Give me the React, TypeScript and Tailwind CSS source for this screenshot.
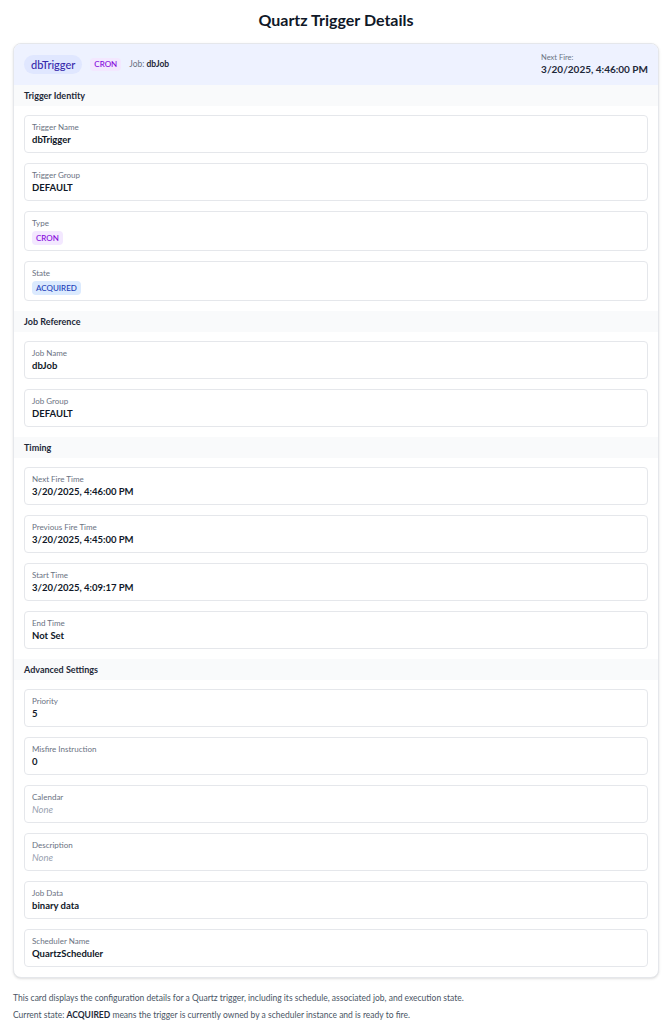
const FONT = "font-['Lato',sans-serif]";

type Field = { label: string; value: string; kind?: "text" | "none" | "cron" | "state" };

const sections: { title: string; fields: Field[] }[] = [
  {
    title: "Trigger Identity",
    fields: [
      { label: "Trigger Name", value: "dbTrigger" },
      { label: "Trigger Group", value: "DEFAULT" },
      { label: "Type", value: "CRON", kind: "cron" },
      { label: "State", value: "ACQUIRED", kind: "state" },
    ],
  },
  {
    title: "Job Reference",
    fields: [
      { label: "Job Name", value: "dbJob" },
      { label: "Job Group", value: "DEFAULT" },
    ],
  },
  {
    title: "Timing",
    fields: [
      { label: "Next Fire Time", value: "3/20/2025, 4:46:00 PM" },
      { label: "Previous Fire Time", value: "3/20/2025, 4:45:00 PM" },
      { label: "Start Time", value: "3/20/2025, 4:09:17 PM" },
      { label: "End Time", value: "Not Set" },
    ],
  },
  {
    title: "Advanced Settings",
    fields: [
      { label: "Priority", value: "5" },
      { label: "Misfire Instruction", value: "0" },
      { label: "Calendar", value: "None", kind: "none" },
      { label: "Description", value: "None", kind: "none" },
      { label: "Job Data", value: "binary data" },
      { label: "Scheduler Name", value: "QuartzScheduler" },
    ],
  },
];

function FieldCard({ label, value, kind = "text" }: Field) {
  return (
    <div className="rounded border border-gray-200 bg-white px-[7px] py-[5px]">
      <div className="text-[8px] leading-[12px] text-gray-500">{label}</div>
      {kind === "text" && (
        <div className="text-[9.5px] font-bold leading-[14px] text-gray-900">{value}</div>
      )}
      {kind === "none" && (
        <div className="text-[9.5px] italic leading-[14px] text-gray-400">{value}</div>
      )}
      {kind === "cron" && (
        <div className="flex pt-[2px]">
          <span className="rounded bg-purple-100 px-[4px] text-[8px] font-medium leading-[14px] text-purple-700">
            {value}
          </span>
        </div>
      )}
      {kind === "state" && (
        <div className="flex pt-[2px]">
          <span className="rounded bg-blue-100 px-[4px] text-[8px] font-medium leading-[14px] text-blue-800">
            {value}
          </span>
        </div>
      )}
    </div>
  );
}

export default function App() {
  return (
    <div className={`${FONT} bg-white px-[13px] pt-[10px] text-gray-900`}>
      <h1 className="text-center text-[16px] font-bold leading-[20px]">Quartz Trigger Details</h1>

      <div className="mt-[13px] overflow-hidden rounded-lg border border-gray-200 bg-white shadow-sm">
        <header className="flex items-center justify-between bg-indigo-50 px-[10px] py-[9px]">
          <div className="flex items-center gap-2">
            <span className="rounded-full bg-indigo-100 px-[7px] py-[3px] text-[11px] font-medium leading-[13px] text-indigo-800">
              dbTrigger
            </span>
            <span className="rounded bg-purple-100 px-[4px] text-[8px] font-medium leading-[13px] text-purple-700">
              CRON
            </span>
            <span className="text-[8.5px] text-gray-500">
              Job: <span className="font-bold text-gray-800">dbJob</span>
            </span>
          </div>
          <div>
            <div className="text-[7.5px] leading-[10px] text-gray-500">Next Fire:</div>
            <div className="text-[10px] font-bold leading-[13px] text-gray-800">3/20/2025, 4:46:00 PM</div>
          </div>
        </header>

        {sections.map((s) => (
          <section key={s.title}>
            <h2 className="bg-gray-50 px-[10px] text-[9px] font-bold leading-[21px] text-gray-800">
              {s.title}
            </h2>
            <div className="flex flex-col gap-[10px] px-[10px] pt-[9px] pb-[10px]">
              {s.fields.map((f) => (
                <FieldCard key={f.label} {...f} />
              ))}
            </div>
          </section>
        ))}
      </div>

      <div className="mt-[15px] space-y-[6px] text-[8.5px] leading-[11px] text-gray-600">
        <p>
          This card displays the configuration details for a Quartz trigger, including its schedule, associated job, and
          execution state.
        </p>
        <p>
          Current state: <span className="font-bold text-gray-800">ACQUIRED</span> means the trigger is currently owned
          by a scheduler instance and is ready to fire.
        </p>
      </div>
    </div>
  );
}
